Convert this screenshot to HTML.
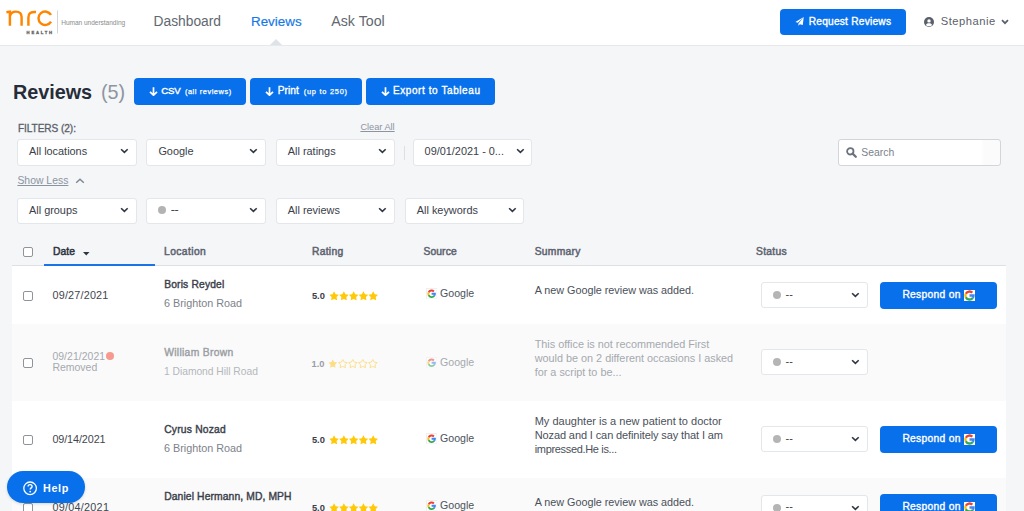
<!DOCTYPE html>
<html><head><meta charset="utf-8"><title>Reviews</title>
<style>
html,body{margin:0;padding:0;}
body{width:1024px;height:511px;overflow:hidden;position:relative;background:#f5f6f8;font-family:"Liberation Sans",sans-serif;}
.t{position:absolute;white-space:nowrap;line-height:0;}
.m{display:inline-block;width:0;height:0;}
</style></head><body>
<div style="position:absolute;left:0px;top:0px;width:1024px;height:45px;background:#fff"></div>
<div style="position:absolute;left:0px;top:45px;width:1024px;height:1px;background:#e6e8ec"></div>
<svg style="position:absolute;left:0;top:0" width="60" height="36" viewBox="0 0 60 36">
<g fill="none" stroke="#ff8500" stroke-width="2.45" stroke-linecap="butt">
<path d="M6.4 12.2 L9.9 11.6 V25.8"/>
<path d="M9.9 16 C10.8 12.9 13.2 11.6 15.8 11.6 C19.6 11.6 21.6 13.6 21.6 17.1 V25.8"/>
<path d="M28.4 25.8 V17.4 C28.4 13.3 30.8 11.6 36 12"/>
<path d="M51.0 14.95 A6.7 6.7 0 1 0 51.0 21.65"/>
</g>
<line x1="57.5" y1="10.4" x2="57.5" y2="33.4" stroke="#d4d4d4" stroke-width="1"/>
<text x="26.6" y="33.6" font-family="Liberation Sans" font-weight="700" font-size="4.2" fill="#666" stroke="#666" stroke-width="0.3" textLength="25.5" lengthAdjust="spacing">HEALTH</text>
</svg>
<div class="t" style="left:61.20px;top:23.00px;font-size:6.6px;font-weight:400;color:#8c8c8c;letter-spacing:-0.050px;">Human understanding<i class="m"></i></div>
<div class="t" style="left:153.50px;top:22.00px;font-size:13.8px;font-weight:400;color:#62686f;letter-spacing:-0.001px;">Dashboard<i class="m"></i></div>
<div class="t" style="left:251.00px;top:22.00px;font-size:13.4px;font-weight:400;color:#1577e8;letter-spacing:0.000px;-webkit-text-stroke:0.15px #1577e8;">Reviews<i class="m"></i></div>
<div class="t" style="left:331.20px;top:21.00px;font-size:14.2px;font-weight:400;color:#62686f;letter-spacing:0.028px;">Ask Tool<i class="m"></i></div>
<div style="position:absolute;left:270px;top:39px;width:0;height:0;border-left:6px solid transparent;border-right:6px solid transparent;border-bottom:6px solid #dfe2e7"></div>
<div style="position:absolute;left:780px;top:9px;width:126px;height:26px;background:#0870eb;border-radius:4px"></div>
<svg style="position:absolute;left:794px;top:16px" width="11" height="11" viewBox="0 0 11 11">
<path d="M9.7 1.0 L1.4 5.9 L3.9 6.8 Z M9.7 1.0 L4.5 7.4 L4.3 9.7 L5.9 8.2 L8.8 9.0 Z" fill="#fff"/></svg>
<div class="t" style="left:808.70px;top:22.00px;font-size:10.2px;font-weight:400;color:#fff;letter-spacing:0.220px;-webkit-text-stroke:0.35px #fff;">Request Reviews<i class="m"></i></div>
<svg style="position:absolute;left:924px;top:17px" width="10" height="10" viewBox="0 0 10 10">
<circle cx="5" cy="5" r="5" fill="#5a606b"/><circle cx="5" cy="3.9" r="1.7" fill="#fff"/>
<path d="M1.8 7.9 C2.6 6.6 3.7 6.2 5 6.2 C6.3 6.2 7.4 6.6 8.2 7.9 C7.4 8.8 6.3 9.2 5 9.2 C3.7 9.2 2.6 8.8 1.8 7.9Z" fill="#fff"/></svg>
<div class="t" style="left:940.80px;top:21.00px;font-size:11.2px;font-weight:400;color:#5a606b;letter-spacing:0.494px;">Stephanie<i class="m"></i></div>
<svg style="position:absolute;left:1001px;top:19px" width="8" height="6" viewBox="0 0 8 6"><path d="M1 1.2 L4 4.2 L7 1.2" fill="none" stroke="#5a606b" stroke-width="1.7"/></svg>
<div class="t" style="left:12.90px;top:92.00px;font-size:19.8px;font-weight:700;color:#262d38;letter-spacing:0.000px;">Reviews<i class="m"></i></div>
<div class="t" style="left:101.00px;top:92.00px;font-size:19.8px;font-weight:400;color:#8d95a1;letter-spacing:0.000px;">(5)<i class="m"></i></div>
<div style="position:absolute;left:134px;top:78px;width:112px;height:27px;background:#0870eb;border-radius:4px"></div>
<svg style="position:absolute;left:149px;top:86.5px" width="9" height="9" viewBox="0 0 9 9"><path d="M4.5 0.3 V8.2 M1 4.8 L4.5 8.2 L8 4.8" fill="none" stroke="#fff" stroke-width="1.7"/></svg>
<div class="t" style="left:161.30px;top:91.00px;font-size:9.6px;font-weight:400;color:#fff;letter-spacing:-0.219px;-webkit-text-stroke:0.4px #fff;">CSV<i class="m"></i></div>
<div class="t" style="left:184.90px;top:92.00px;font-size:7.4px;font-weight:400;color:#fff;letter-spacing:0.573px;-webkit-text-stroke:0.25px #fff;">(all reviews)<i class="m"></i></div>
<div style="position:absolute;left:250px;top:78px;width:112px;height:27px;background:#0870eb;border-radius:4px"></div>
<svg style="position:absolute;left:265px;top:86.5px" width="9" height="9" viewBox="0 0 9 9"><path d="M4.5 0.3 V8.2 M1 4.8 L4.5 8.2 L8 4.8" fill="none" stroke="#fff" stroke-width="1.7"/></svg>
<div class="t" style="left:277.70px;top:91.00px;font-size:10.2px;font-weight:400;color:#fff;letter-spacing:0.070px;-webkit-text-stroke:0.35px #fff;">Print<i class="m"></i></div>
<div class="t" style="left:303.80px;top:92.00px;font-size:7.4px;font-weight:400;color:#fff;letter-spacing:0.746px;-webkit-text-stroke:0.25px #fff;">(up to 250)<i class="m"></i></div>
<div style="position:absolute;left:366px;top:78px;width:129px;height:27px;background:#0870eb;border-radius:4px"></div>
<svg style="position:absolute;left:380.5px;top:86.5px" width="9" height="9" viewBox="0 0 9 9"><path d="M4.5 0.3 V8.2 M1 4.8 L4.5 8.2 L8 4.8" fill="none" stroke="#fff" stroke-width="1.7"/></svg>
<div class="t" style="left:392.90px;top:91.00px;font-size:10px;font-weight:400;color:#fff;letter-spacing:0.588px;-webkit-text-stroke:0.35px #fff;">Export to Tableau<i class="m"></i></div>
<div class="t" style="left:17.90px;top:129.00px;font-size:10.1px;font-weight:400;color:#5a606a;letter-spacing:-0.057px;-webkit-text-stroke:0.3px #5a606a;">FILTERS (2):<i class="m"></i></div>
<div class="t" style="left:360.40px;top:127.00px;font-size:9.2px;font-weight:400;color:#8b94a0;letter-spacing:0.005px;text-decoration:underline;">Clear All<i class="m"></i></div>
<div style="position:absolute;left:17px;top:139px;width:120px;height:27px;background:#fff;border:1px solid #e3e6ea;border-radius:3px;box-sizing:border-box"></div>
<div class="t" style="left:29.00px;top:151.00px;font-size:10.9px;font-weight:400;color:#3a404a;letter-spacing:0.000px;">All locations<i class="m"></i></div>
<svg style="position:absolute;left:119.5px;top:148px" width="9" height="6" viewBox="0 0 9 6"><path d="M1.1 1.2 L4.4 4.4 L7.7 1.2" fill="none" stroke="#2f3541" stroke-width="1.6"/></svg>
<div style="position:absolute;left:146px;top:139px;width:120px;height:27px;background:#fff;border:1px solid #e3e6ea;border-radius:3px;box-sizing:border-box"></div>
<div class="t" style="left:158.40px;top:151.00px;font-size:10.9px;font-weight:400;color:#3a404a;letter-spacing:0.000px;">Google<i class="m"></i></div>
<svg style="position:absolute;left:249px;top:148px" width="9" height="6" viewBox="0 0 9 6"><path d="M1.1 1.2 L4.4 4.4 L7.7 1.2" fill="none" stroke="#2f3541" stroke-width="1.6"/></svg>
<div style="position:absolute;left:276px;top:139px;width:118.5px;height:27px;background:#fff;border:1px solid #e3e6ea;border-radius:3px;box-sizing:border-box"></div>
<div class="t" style="left:287.80px;top:151.00px;font-size:10.9px;font-weight:400;color:#3a404a;letter-spacing:0.000px;">All ratings<i class="m"></i></div>
<svg style="position:absolute;left:378px;top:148px" width="9" height="6" viewBox="0 0 9 6"><path d="M1.1 1.2 L4.4 4.4 L7.7 1.2" fill="none" stroke="#2f3541" stroke-width="1.6"/></svg>
<div style="position:absolute;left:403.5px;top:146px;width:1px;height:14px;background:#dcdfe3"></div>
<div style="position:absolute;left:413px;top:139px;width:118.5px;height:27px;background:#fff;border:1px solid #e3e6ea;border-radius:3px;box-sizing:border-box"></div>
<div class="t" style="left:424.60px;top:151.00px;font-size:10.9px;font-weight:400;color:#3a404a;letter-spacing:0.000px;">09/01/2021 - 0...<i class="m"></i></div>
<svg style="position:absolute;left:515.8px;top:148px" width="9" height="6" viewBox="0 0 9 6"><path d="M1.1 1.2 L4.4 4.4 L7.7 1.2" fill="none" stroke="#2f3541" stroke-width="1.6"/></svg>
<div style="position:absolute;left:838px;top:139px;width:163px;height:27px;background:linear-gradient(90deg,#fff 0,#fff 88%,#fbfbfb 90%);border:1px solid #d3d5d8;border-radius:3px;box-sizing:border-box"></div>
<svg style="position:absolute;left:845.5px;top:147px" width="11" height="11" viewBox="0 0 11 11"><circle cx="4.3" cy="4.3" r="3.2" fill="none" stroke="#6b737e" stroke-width="1.8"/><path d="M6.6 6.6 L9.8 9.8" stroke="#6b737e" stroke-width="2.2" stroke-linecap="round"/></svg>
<div class="t" style="left:861.30px;top:153.00px;font-size:10.4px;font-weight:400;color:#7b828c;letter-spacing:0.011px;">Search<i class="m"></i></div>
<div class="t" style="left:17.40px;top:181.00px;font-size:10.4px;font-weight:400;color:#8b94a0;letter-spacing:0.015px;text-decoration:underline;">Show Less<i class="m"></i></div>
<svg style="position:absolute;left:75px;top:178px" width="10" height="6" viewBox="0 0 10 6"><path d="M1.2 4.8 L5 1.3 L8.8 4.8" fill="none" stroke="#7f8894" stroke-width="1.5"/></svg>
<div style="position:absolute;left:17px;top:198px;width:120px;height:26px;background:#fff;border:1px solid #e3e6ea;border-radius:3px;box-sizing:border-box"></div>
<div class="t" style="left:29.00px;top:210.00px;font-size:10.9px;font-weight:400;color:#3a404a;letter-spacing:0.000px;">All groups<i class="m"></i></div>
<svg style="position:absolute;left:119.5px;top:207px" width="9" height="6" viewBox="0 0 9 6"><path d="M1.1 1.2 L4.4 4.4 L7.7 1.2" fill="none" stroke="#2f3541" stroke-width="1.6"/></svg>
<div style="position:absolute;left:146px;top:198px;width:120px;height:26px;background:#fff;border:1px solid #e3e6ea;border-radius:3px;box-sizing:border-box"></div>
<svg style="position:absolute;left:249px;top:207px" width="9" height="6" viewBox="0 0 9 6"><path d="M1.1 1.2 L4.4 4.4 L7.7 1.2" fill="none" stroke="#2f3541" stroke-width="1.6"/></svg>
<div style="position:absolute;left:158px;top:206px;width:8.4px;height:8.4px;background:#b3b3b3;border-radius:50%"></div>
<div class="t" style="left:171.10px;top:209.00px;font-size:10.9px;font-weight:400;color:#3a404a;letter-spacing:0.000px;-webkit-text-stroke:0.3px #3a404a;">--<i class="m"></i></div>
<div style="position:absolute;left:276px;top:198px;width:118.5px;height:26px;background:#fff;border:1px solid #e3e6ea;border-radius:3px;box-sizing:border-box"></div>
<div class="t" style="left:287.80px;top:210.00px;font-size:10.9px;font-weight:400;color:#3a404a;letter-spacing:0.000px;">All reviews<i class="m"></i></div>
<svg style="position:absolute;left:378px;top:207px" width="9" height="6" viewBox="0 0 9 6"><path d="M1.1 1.2 L4.4 4.4 L7.7 1.2" fill="none" stroke="#2f3541" stroke-width="1.6"/></svg>
<div style="position:absolute;left:405px;top:198px;width:119px;height:26px;background:#fff;border:1px solid #e3e6ea;border-radius:3px;box-sizing:border-box"></div>
<div class="t" style="left:416.80px;top:210.00px;font-size:10.9px;font-weight:400;color:#3a404a;letter-spacing:0.000px;">All keywords<i class="m"></i></div>
<svg style="position:absolute;left:507.5px;top:207px" width="9" height="6" viewBox="0 0 9 6"><path d="M1.1 1.2 L4.4 4.4 L7.7 1.2" fill="none" stroke="#2f3541" stroke-width="1.6"/></svg>
<div style="position:absolute;left:12px;top:265px;width:994px;height:1px;background:#dde0e4"></div>
<div style="position:absolute;left:44px;top:264px;width:111px;height:2px;background:#1a73e8"></div>
<div style="position:absolute;left:23px;top:247px;width:10px;height:10px;background:#fff;border:1px solid #8f949b;border-radius:2px;box-sizing:border-box"></div>
<div class="t" style="left:53.00px;top:252.00px;font-size:10.3px;font-weight:400;color:#2e3440;letter-spacing:0.082px;-webkit-text-stroke:0.5px #2e3440;">Date<i class="m"></i></div>
<svg style="position:absolute;left:83px;top:252px" width="7" height="4" viewBox="0 0 7 4"><path d="M0 0 H6.5 L3.25 3.5Z" fill="#2e3440"/></svg>
<div class="t" style="left:164.00px;top:252.00px;font-size:10.3px;font-weight:400;color:#5d6470;letter-spacing:0.401px;-webkit-text-stroke:0.5px #5d6470;">Location<i class="m"></i></div>
<div class="t" style="left:311.90px;top:252.00px;font-size:10.3px;font-weight:400;color:#5d6470;letter-spacing:0.315px;-webkit-text-stroke:0.5px #5d6470;">Rating<i class="m"></i></div>
<div class="t" style="left:423.40px;top:252.00px;font-size:10.3px;font-weight:400;color:#5d6470;letter-spacing:0.134px;-webkit-text-stroke:0.5px #5d6470;">Source<i class="m"></i></div>
<div class="t" style="left:534.70px;top:252.00px;font-size:10.3px;font-weight:400;color:#5d6470;letter-spacing:0.289px;-webkit-text-stroke:0.5px #5d6470;">Summary<i class="m"></i></div>
<div class="t" style="left:756.00px;top:252.00px;font-size:10.3px;font-weight:400;color:#5d6470;letter-spacing:0.300px;-webkit-text-stroke:0.5px #5d6470;">Status<i class="m"></i></div>
<div style="position:absolute;left:12px;top:266px;width:994px;height:58px;background:#fff"></div>
<div style="position:absolute;left:12px;top:324px;width:994px;height:77px;background:#fafafa"></div>
<div style="position:absolute;left:12px;top:401px;width:994px;height:77px;background:#fff"></div>
<div style="position:absolute;left:12px;top:478px;width:994px;height:33px;background:#fafafa"></div>
<div style="position:absolute;left:23px;top:290.5px;width:10px;height:10px;background:#fff;border:1px solid #8f949b;border-radius:2px;box-sizing:border-box"></div>
<div class="t" style="left:52.50px;top:295.00px;font-size:10.8px;font-weight:400;color:#3f454e;letter-spacing:0.194px;">09/27/2021<i class="m"></i></div>
<div class="t" style="left:164.20px;top:285.00px;font-size:10.3px;font-weight:400;color:#3a404a;letter-spacing:0.155px;-webkit-text-stroke:0.4px #3a404a;">Boris Reydel<i class="m"></i></div>
<div class="t" style="left:164.00px;top:303.00px;font-size:10.8px;font-weight:400;color:#7d828a;letter-spacing:-0.004px;">6 Brighton Road<i class="m"></i></div>
<div class="t" style="left:311.90px;top:296.00px;font-size:9.3px;font-weight:700;color:#3a404a;letter-spacing:0.000px;">5.0<i class="m"></i></div>
<svg style="position:absolute;left:329.2px;top:290.6px" width="52" height="11" viewBox="0 0 52 11"><path d="M5.10,0.30 L6.66,3.16 L9.86,3.75 L7.62,6.12 L8.04,9.35 L5.10,7.95 L2.16,9.35 L2.58,6.12 L0.34,3.75 L3.54,3.16Z" fill="#ffc908"/><path d="M14.88,0.30 L16.44,3.16 L19.64,3.75 L17.40,6.12 L17.82,9.35 L14.88,7.95 L11.94,9.35 L12.36,6.12 L10.12,3.75 L13.32,3.16Z" fill="#ffc908"/><path d="M24.66,0.30 L26.22,3.16 L29.42,3.75 L27.18,6.12 L27.60,9.35 L24.66,7.95 L21.72,9.35 L22.14,6.12 L19.90,3.75 L23.10,3.16Z" fill="#ffc908"/><path d="M34.44,0.30 L36.00,3.16 L39.20,3.75 L36.96,6.12 L37.38,9.35 L34.44,7.95 L31.50,9.35 L31.92,6.12 L29.68,3.75 L32.88,3.16Z" fill="#ffc908"/><path d="M44.22,0.30 L45.78,3.16 L48.98,3.75 L46.74,6.12 L47.16,9.35 L44.22,7.95 L41.28,9.35 L41.70,6.12 L39.46,3.75 L42.66,3.16Z" fill="#ffc908"/></svg>
<svg style="position:absolute;left:425.5px;top:288.2px;opacity:1" width="11" height="11" viewBox="0 0 11 11"><rect x="0.5" y="0.5" width="10.5" height="10.5" fill="#fff" stroke="#efefef" stroke-width="1"/><g fill="none" stroke-width="1.9"><path d="M7.93 3.47 A3.3 3.3 0 0 0 2.61 4.41" stroke="#ea4335"/><path d="M2.61 4.41 A3.3 3.3 0 0 0 2.61 7.19" stroke="#fbbc05"/><path d="M2.61 7.19 A3.3 3.3 0 0 0 8.30 7.69" stroke="#34a853"/><path d="M8.30 7.69 A3.3 3.3 0 0 0 8.9 5.8 H5.6" stroke="#4285f4"/></g></svg>
<div class="t" style="left:440.00px;top:293.00px;font-size:10.6px;font-weight:400;color:#4c525b;letter-spacing:0.000px;">Google<i class="m"></i></div>
<div class="t" style="left:534.70px;top:290.00px;font-size:10.8px;font-weight:400;color:#4a5059;letter-spacing:-0.010px;">A new Google review was added.<i class="m"></i></div>
<div style="position:absolute;left:761px;top:282px;width:107px;height:26px;background:#fff;border:1px solid #e3e6ea;border-radius:3px;box-sizing:border-box"></div>
<div style="position:absolute;left:772.5px;top:291px;width:8px;height:8px;background:#b5b5b5;border-radius:50%"></div>
<div class="t" style="left:785.50px;top:294.00px;font-size:10.9px;font-weight:400;color:#3a404a;letter-spacing:0.000px;">--<i class="m"></i></div>
<svg style="position:absolute;left:851px;top:292px" width="9" height="6" viewBox="0 0 9 6"><path d="M1.1 1.2 L4.4 4.4 L7.7 1.2" fill="none" stroke="#2f3541" stroke-width="1.6"/></svg>
<div style="position:absolute;left:880px;top:281.8px;width:117px;height:27px;background:#0870eb;border-radius:4px"></div>
<div class="t" style="left:902.40px;top:295.00px;font-size:10.3px;font-weight:400;color:#fff;letter-spacing:0.278px;-webkit-text-stroke:0.35px #fff;">Respond on<i class="m"></i></div>
<div style="position:absolute;left:964px;top:289.8px;width:11px;height:11px;background:#fff"></div>
<svg style="position:absolute;left:964px;top:289.8px;opacity:1" width="11" height="11" viewBox="1.1 1.3 9 9"><g fill="none" stroke-width="1.9"><path d="M7.93 3.47 A3.3 3.3 0 0 0 2.61 4.41" stroke="#ea4335"/><path d="M2.61 4.41 A3.3 3.3 0 0 0 2.61 7.19" stroke="#fbbc05"/><path d="M2.61 7.19 A3.3 3.3 0 0 0 8.30 7.69" stroke="#34a853"/><path d="M8.30 7.69 A3.3 3.3 0 0 0 8.9 5.8 H5.6" stroke="#4285f4"/></g></svg>
<div style="position:absolute;left:23px;top:358px;width:10px;height:10px;background:#fff;border:1px solid #8f949b;border-radius:2px;box-sizing:border-box"></div>
<div class="t" style="left:52.40px;top:357.00px;font-size:10.4px;font-weight:400;color:#a5a9af;letter-spacing:0.072px;">09/21/2021<i class="m"></i></div>
<div style="position:absolute;left:106.3px;top:352.2px;width:8px;height:8px;background:#f6998e;border-radius:50%"></div>
<div class="t" style="left:52.40px;top:367.00px;font-size:10.5px;font-weight:400;color:#a5a9af;letter-spacing:-0.007px;">Removed<i class="m"></i></div>
<div class="t" style="left:164.20px;top:353.00px;font-size:10.3px;font-weight:400;color:#9a9ea4;letter-spacing:0.313px;-webkit-text-stroke:0.4px #9a9ea4;">William Brown<i class="m"></i></div>
<div class="t" style="left:164.00px;top:372.00px;font-size:10.3px;font-weight:400;color:#b4b7bb;letter-spacing:-0.031px;">1 Diamond Hill Road<i class="m"></i></div>
<div class="t" style="left:311.50px;top:364.00px;font-size:9.3px;font-weight:700;color:#9a9ea4;letter-spacing:0.000px;">1.0<i class="m"></i></div>
<svg style="position:absolute;left:328.2px;top:358.5px" width="52" height="11" viewBox="0 0 52 11"><path d="M4.80,0.50 L6.20,3.07 L9.08,3.61 L7.07,5.74 L7.45,8.64 L4.80,7.38 L2.15,8.64 L2.53,5.74 L0.52,3.61 L3.40,3.07Z" fill="#fcdd86"/><path d="M14.80,0.50 L16.20,3.07 L19.08,3.61 L17.07,5.74 L17.45,8.64 L14.80,7.38 L12.15,8.64 L12.53,5.74 L10.52,3.61 L13.40,3.07Z" fill="none" stroke="#fcdd86" stroke-width="0.9" stroke-linejoin="round"/><path d="M24.80,0.50 L26.20,3.07 L29.08,3.61 L27.07,5.74 L27.45,8.64 L24.80,7.38 L22.15,8.64 L22.53,5.74 L20.52,3.61 L23.40,3.07Z" fill="none" stroke="#fcdd86" stroke-width="0.9" stroke-linejoin="round"/><path d="M34.80,0.50 L36.20,3.07 L39.08,3.61 L37.07,5.74 L37.45,8.64 L34.80,7.38 L32.15,8.64 L32.53,5.74 L30.52,3.61 L33.40,3.07Z" fill="none" stroke="#fcdd86" stroke-width="0.9" stroke-linejoin="round"/><path d="M44.80,0.50 L46.20,3.07 L49.08,3.61 L47.07,5.74 L47.45,8.64 L44.80,7.38 L42.15,8.64 L42.53,5.74 L40.52,3.61 L43.40,3.07Z" fill="none" stroke="#fcdd86" stroke-width="0.9" stroke-linejoin="round"/></svg>
<svg style="position:absolute;left:425.5px;top:356.5px;opacity:0.55" width="11" height="11" viewBox="0 0 11 11"><rect x="0.5" y="0.5" width="10.5" height="10.5" fill="#fff" stroke="#efefef" stroke-width="1"/><g fill="none" stroke-width="1.9"><path d="M7.93 3.47 A3.3 3.3 0 0 0 2.61 4.41" stroke="#ea4335"/><path d="M2.61 4.41 A3.3 3.3 0 0 0 2.61 7.19" stroke="#fbbc05"/><path d="M2.61 7.19 A3.3 3.3 0 0 0 8.30 7.69" stroke="#34a853"/><path d="M8.30 7.69 A3.3 3.3 0 0 0 8.9 5.8 H5.6" stroke="#4285f4"/></g></svg>
<div class="t" style="left:440.00px;top:362.00px;font-size:10.6px;font-weight:400;color:#a5a9af;letter-spacing:0.000px;">Google<i class="m"></i></div>
<div class="t" style="left:534.70px;top:344.00px;font-size:10.85px;font-weight:400;color:#a5a9af;letter-spacing:0.001px;">This office is not recommended First<i class="m"></i></div>
<div class="t" style="left:534.70px;top:358.00px;font-size:10.85px;font-weight:400;color:#a5a9af;letter-spacing:-0.007px;">would be on 2 different occasions I asked<i class="m"></i></div>
<div class="t" style="left:534.70px;top:372.00px;font-size:10.85px;font-weight:400;color:#a5a9af;letter-spacing:0.003px;">for a script to be...<i class="m"></i></div>
<div style="position:absolute;left:761px;top:349px;width:107px;height:26px;background:#fff;border:1px solid #e3e6ea;border-radius:3px;box-sizing:border-box"></div>
<div style="position:absolute;left:772.5px;top:358px;width:8px;height:8px;background:#b5b5b5;border-radius:50%"></div>
<div class="t" style="left:785.50px;top:361.00px;font-size:10.9px;font-weight:400;color:#3a404a;letter-spacing:0.000px;">--<i class="m"></i></div>
<svg style="position:absolute;left:851px;top:359px" width="9" height="6" viewBox="0 0 9 6"><path d="M1.1 1.2 L4.4 4.4 L7.7 1.2" fill="none" stroke="#2f3541" stroke-width="1.6"/></svg>
<div style="position:absolute;left:23px;top:435px;width:10px;height:10px;background:#fff;border:1px solid #8f949b;border-radius:2px;box-sizing:border-box"></div>
<div class="t" style="left:52.40px;top:439.00px;font-size:10.8px;font-weight:400;color:#3f454e;letter-spacing:-0.095px;">09/14/2021<i class="m"></i></div>
<div class="t" style="left:164.20px;top:430.00px;font-size:10.3px;font-weight:400;color:#3a404a;letter-spacing:0.207px;-webkit-text-stroke:0.4px #3a404a;">Cyrus Nozad<i class="m"></i></div>
<div class="t" style="left:164.00px;top:448.00px;font-size:10.8px;font-weight:400;color:#7d828a;letter-spacing:-0.004px;">6 Brighton Road<i class="m"></i></div>
<div class="t" style="left:311.90px;top:440.00px;font-size:9.3px;font-weight:700;color:#3a404a;letter-spacing:0.000px;">5.0<i class="m"></i></div>
<svg style="position:absolute;left:329.2px;top:435.1px" width="52" height="11" viewBox="0 0 52 11"><path d="M5.10,0.30 L6.66,3.16 L9.86,3.75 L7.62,6.12 L8.04,9.35 L5.10,7.95 L2.16,9.35 L2.58,6.12 L0.34,3.75 L3.54,3.16Z" fill="#ffc908"/><path d="M14.88,0.30 L16.44,3.16 L19.64,3.75 L17.40,6.12 L17.82,9.35 L14.88,7.95 L11.94,9.35 L12.36,6.12 L10.12,3.75 L13.32,3.16Z" fill="#ffc908"/><path d="M24.66,0.30 L26.22,3.16 L29.42,3.75 L27.18,6.12 L27.60,9.35 L24.66,7.95 L21.72,9.35 L22.14,6.12 L19.90,3.75 L23.10,3.16Z" fill="#ffc908"/><path d="M34.44,0.30 L36.00,3.16 L39.20,3.75 L36.96,6.12 L37.38,9.35 L34.44,7.95 L31.50,9.35 L31.92,6.12 L29.68,3.75 L32.88,3.16Z" fill="#ffc908"/><path d="M44.22,0.30 L45.78,3.16 L48.98,3.75 L46.74,6.12 L47.16,9.35 L44.22,7.95 L41.28,9.35 L41.70,6.12 L39.46,3.75 L42.66,3.16Z" fill="#ffc908"/></svg>
<svg style="position:absolute;left:425.5px;top:432.5px;opacity:1" width="11" height="11" viewBox="0 0 11 11"><rect x="0.5" y="0.5" width="10.5" height="10.5" fill="#fff" stroke="#efefef" stroke-width="1"/><g fill="none" stroke-width="1.9"><path d="M7.93 3.47 A3.3 3.3 0 0 0 2.61 4.41" stroke="#ea4335"/><path d="M2.61 4.41 A3.3 3.3 0 0 0 2.61 7.19" stroke="#fbbc05"/><path d="M2.61 7.19 A3.3 3.3 0 0 0 8.30 7.69" stroke="#34a853"/><path d="M8.30 7.69 A3.3 3.3 0 0 0 8.9 5.8 H5.6" stroke="#4285f4"/></g></svg>
<div class="t" style="left:440.00px;top:438.00px;font-size:10.6px;font-weight:400;color:#4c525b;letter-spacing:0.000px;">Google<i class="m"></i></div>
<div class="t" style="left:534.70px;top:421.00px;font-size:11px;font-weight:400;color:#4a5059;letter-spacing:0.014px;">My daughter is a new patient to doctor<i class="m"></i></div>
<div class="t" style="left:534.70px;top:435.00px;font-size:11px;font-weight:400;color:#4a5059;letter-spacing:-0.111px;">Nozad and I can definitely say that I am<i class="m"></i></div>
<div class="t" style="left:534.70px;top:449.00px;font-size:11px;font-weight:400;color:#4a5059;letter-spacing:-0.331px;">impressed.He is...<i class="m"></i></div>
<div style="position:absolute;left:761px;top:426px;width:107px;height:26px;background:#fff;border:1px solid #e3e6ea;border-radius:3px;box-sizing:border-box"></div>
<div style="position:absolute;left:772.5px;top:435px;width:8px;height:8px;background:#b5b5b5;border-radius:50%"></div>
<div class="t" style="left:785.50px;top:438.00px;font-size:10.9px;font-weight:400;color:#3a404a;letter-spacing:0.000px;">--<i class="m"></i></div>
<svg style="position:absolute;left:851px;top:436px" width="9" height="6" viewBox="0 0 9 6"><path d="M1.1 1.2 L4.4 4.4 L7.7 1.2" fill="none" stroke="#2f3541" stroke-width="1.6"/></svg>
<div style="position:absolute;left:880px;top:426.2px;width:117px;height:27px;background:#0870eb;border-radius:4px"></div>
<div class="t" style="left:902.40px;top:439.00px;font-size:10.3px;font-weight:400;color:#fff;letter-spacing:0.278px;-webkit-text-stroke:0.35px #fff;">Respond on<i class="m"></i></div>
<div style="position:absolute;left:964px;top:434.2px;width:11px;height:11px;background:#fff"></div>
<svg style="position:absolute;left:964px;top:434.2px;opacity:1" width="11" height="11" viewBox="1.1 1.3 9 9"><g fill="none" stroke-width="1.9"><path d="M7.93 3.47 A3.3 3.3 0 0 0 2.61 4.41" stroke="#ea4335"/><path d="M2.61 4.41 A3.3 3.3 0 0 0 2.61 7.19" stroke="#fbbc05"/><path d="M2.61 7.19 A3.3 3.3 0 0 0 8.30 7.69" stroke="#34a853"/><path d="M8.30 7.69 A3.3 3.3 0 0 0 8.9 5.8 H5.6" stroke="#4285f4"/></g></svg>
<div style="position:absolute;left:23px;top:502.5px;width:10px;height:10px;background:#fff;border:1px solid #8f949b;border-radius:2px;box-sizing:border-box"></div>
<div class="t" style="left:52.50px;top:507.00px;font-size:10.8px;font-weight:400;color:#3f454e;letter-spacing:0.261px;">09/04/2021<i class="m"></i></div>
<div class="t" style="left:164.20px;top:497.00px;font-size:10.3px;font-weight:400;color:#3a404a;letter-spacing:0.119px;-webkit-text-stroke:0.4px #3a404a;">Daniel Hermann, MD, MPH<i class="m"></i></div>
<div class="t" style="left:311.90px;top:508.00px;font-size:9.3px;font-weight:700;color:#3a404a;letter-spacing:0.000px;">5.0<i class="m"></i></div>
<svg style="position:absolute;left:329.2px;top:502.6px" width="52" height="11" viewBox="0 0 52 11"><path d="M5.10,0.30 L6.66,3.16 L9.86,3.75 L7.62,6.12 L8.04,9.35 L5.10,7.95 L2.16,9.35 L2.58,6.12 L0.34,3.75 L3.54,3.16Z" fill="#ffc908"/><path d="M14.88,0.30 L16.44,3.16 L19.64,3.75 L17.40,6.12 L17.82,9.35 L14.88,7.95 L11.94,9.35 L12.36,6.12 L10.12,3.75 L13.32,3.16Z" fill="#ffc908"/><path d="M24.66,0.30 L26.22,3.16 L29.42,3.75 L27.18,6.12 L27.60,9.35 L24.66,7.95 L21.72,9.35 L22.14,6.12 L19.90,3.75 L23.10,3.16Z" fill="#ffc908"/><path d="M34.44,0.30 L36.00,3.16 L39.20,3.75 L36.96,6.12 L37.38,9.35 L34.44,7.95 L31.50,9.35 L31.92,6.12 L29.68,3.75 L32.88,3.16Z" fill="#ffc908"/><path d="M44.22,0.30 L45.78,3.16 L48.98,3.75 L46.74,6.12 L47.16,9.35 L44.22,7.95 L41.28,9.35 L41.70,6.12 L39.46,3.75 L42.66,3.16Z" fill="#ffc908"/></svg>
<svg style="position:absolute;left:425.5px;top:500.2px;opacity:1" width="11" height="11" viewBox="0 0 11 11"><rect x="0.5" y="0.5" width="10.5" height="10.5" fill="#fff" stroke="#efefef" stroke-width="1"/><g fill="none" stroke-width="1.9"><path d="M7.93 3.47 A3.3 3.3 0 0 0 2.61 4.41" stroke="#ea4335"/><path d="M2.61 4.41 A3.3 3.3 0 0 0 2.61 7.19" stroke="#fbbc05"/><path d="M2.61 7.19 A3.3 3.3 0 0 0 8.30 7.69" stroke="#34a853"/><path d="M8.30 7.69 A3.3 3.3 0 0 0 8.9 5.8 H5.6" stroke="#4285f4"/></g></svg>
<div class="t" style="left:440.00px;top:505.00px;font-size:10.6px;font-weight:400;color:#4c525b;letter-spacing:0.000px;">Google<i class="m"></i></div>
<div class="t" style="left:534.70px;top:502.00px;font-size:10.8px;font-weight:400;color:#4a5059;letter-spacing:-0.010px;">A new Google review was added.<i class="m"></i></div>
<div style="position:absolute;left:761px;top:494.5px;width:107px;height:26px;background:#fff;border:1px solid #e3e6ea;border-radius:3px;box-sizing:border-box"></div>
<div style="position:absolute;left:772.5px;top:503.5px;width:8px;height:8px;background:#b5b5b5;border-radius:50%"></div>
<div class="t" style="left:785.50px;top:506.00px;font-size:10.9px;font-weight:400;color:#3a404a;letter-spacing:0.000px;">--<i class="m"></i></div>
<svg style="position:absolute;left:851px;top:504.5px" width="9" height="6" viewBox="0 0 9 6"><path d="M1.1 1.2 L4.4 4.4 L7.7 1.2" fill="none" stroke="#2f3541" stroke-width="1.6"/></svg>
<div style="position:absolute;left:880px;top:493.8px;width:117px;height:27px;background:#0870eb;border-radius:4px"></div>
<div class="t" style="left:902.40px;top:507.00px;font-size:10.3px;font-weight:400;color:#fff;letter-spacing:0.278px;-webkit-text-stroke:0.35px #fff;">Respond on<i class="m"></i></div>
<div style="position:absolute;left:964px;top:501.8px;width:11px;height:11px;background:#fff"></div>
<svg style="position:absolute;left:964px;top:501.8px;opacity:1" width="11" height="11" viewBox="1.1 1.3 9 9"><g fill="none" stroke-width="1.9"><path d="M7.93 3.47 A3.3 3.3 0 0 0 2.61 4.41" stroke="#ea4335"/><path d="M2.61 4.41 A3.3 3.3 0 0 0 2.61 7.19" stroke="#fbbc05"/><path d="M2.61 7.19 A3.3 3.3 0 0 0 8.30 7.69" stroke="#34a853"/><path d="M8.30 7.69 A3.3 3.3 0 0 0 8.9 5.8 H5.6" stroke="#4285f4"/></g></svg>
<div style="position:absolute;left:7px;top:471px;width:78px;height:32px;background:#0870eb;border-radius:16px;box-shadow:0 1px 3px rgba(0,0,0,.15)"></div>
<svg style="position:absolute;left:23px;top:480.5px" width="15" height="15" viewBox="0 0 15 15"><circle cx="7.1" cy="7.3" r="6.3" fill="none" stroke="#fff" stroke-width="1.3"/><path d="M5.1 5.6 C5.1 4.3 6 3.6 7.1 3.6 C8.3 3.6 9.1 4.4 9.1 5.4 C9.1 6.8 7.2 7 7.2 8.6" fill="none" stroke="#fff" stroke-width="1.4"/><circle cx="7.2" cy="10.6" r="0.9" fill="#fff"/></svg>
<div class="t" style="left:43.00px;top:488.00px;font-size:10.8px;font-weight:700;color:#fff;letter-spacing:0.632px;">Help<i class="m"></i></div>
</body></html>
